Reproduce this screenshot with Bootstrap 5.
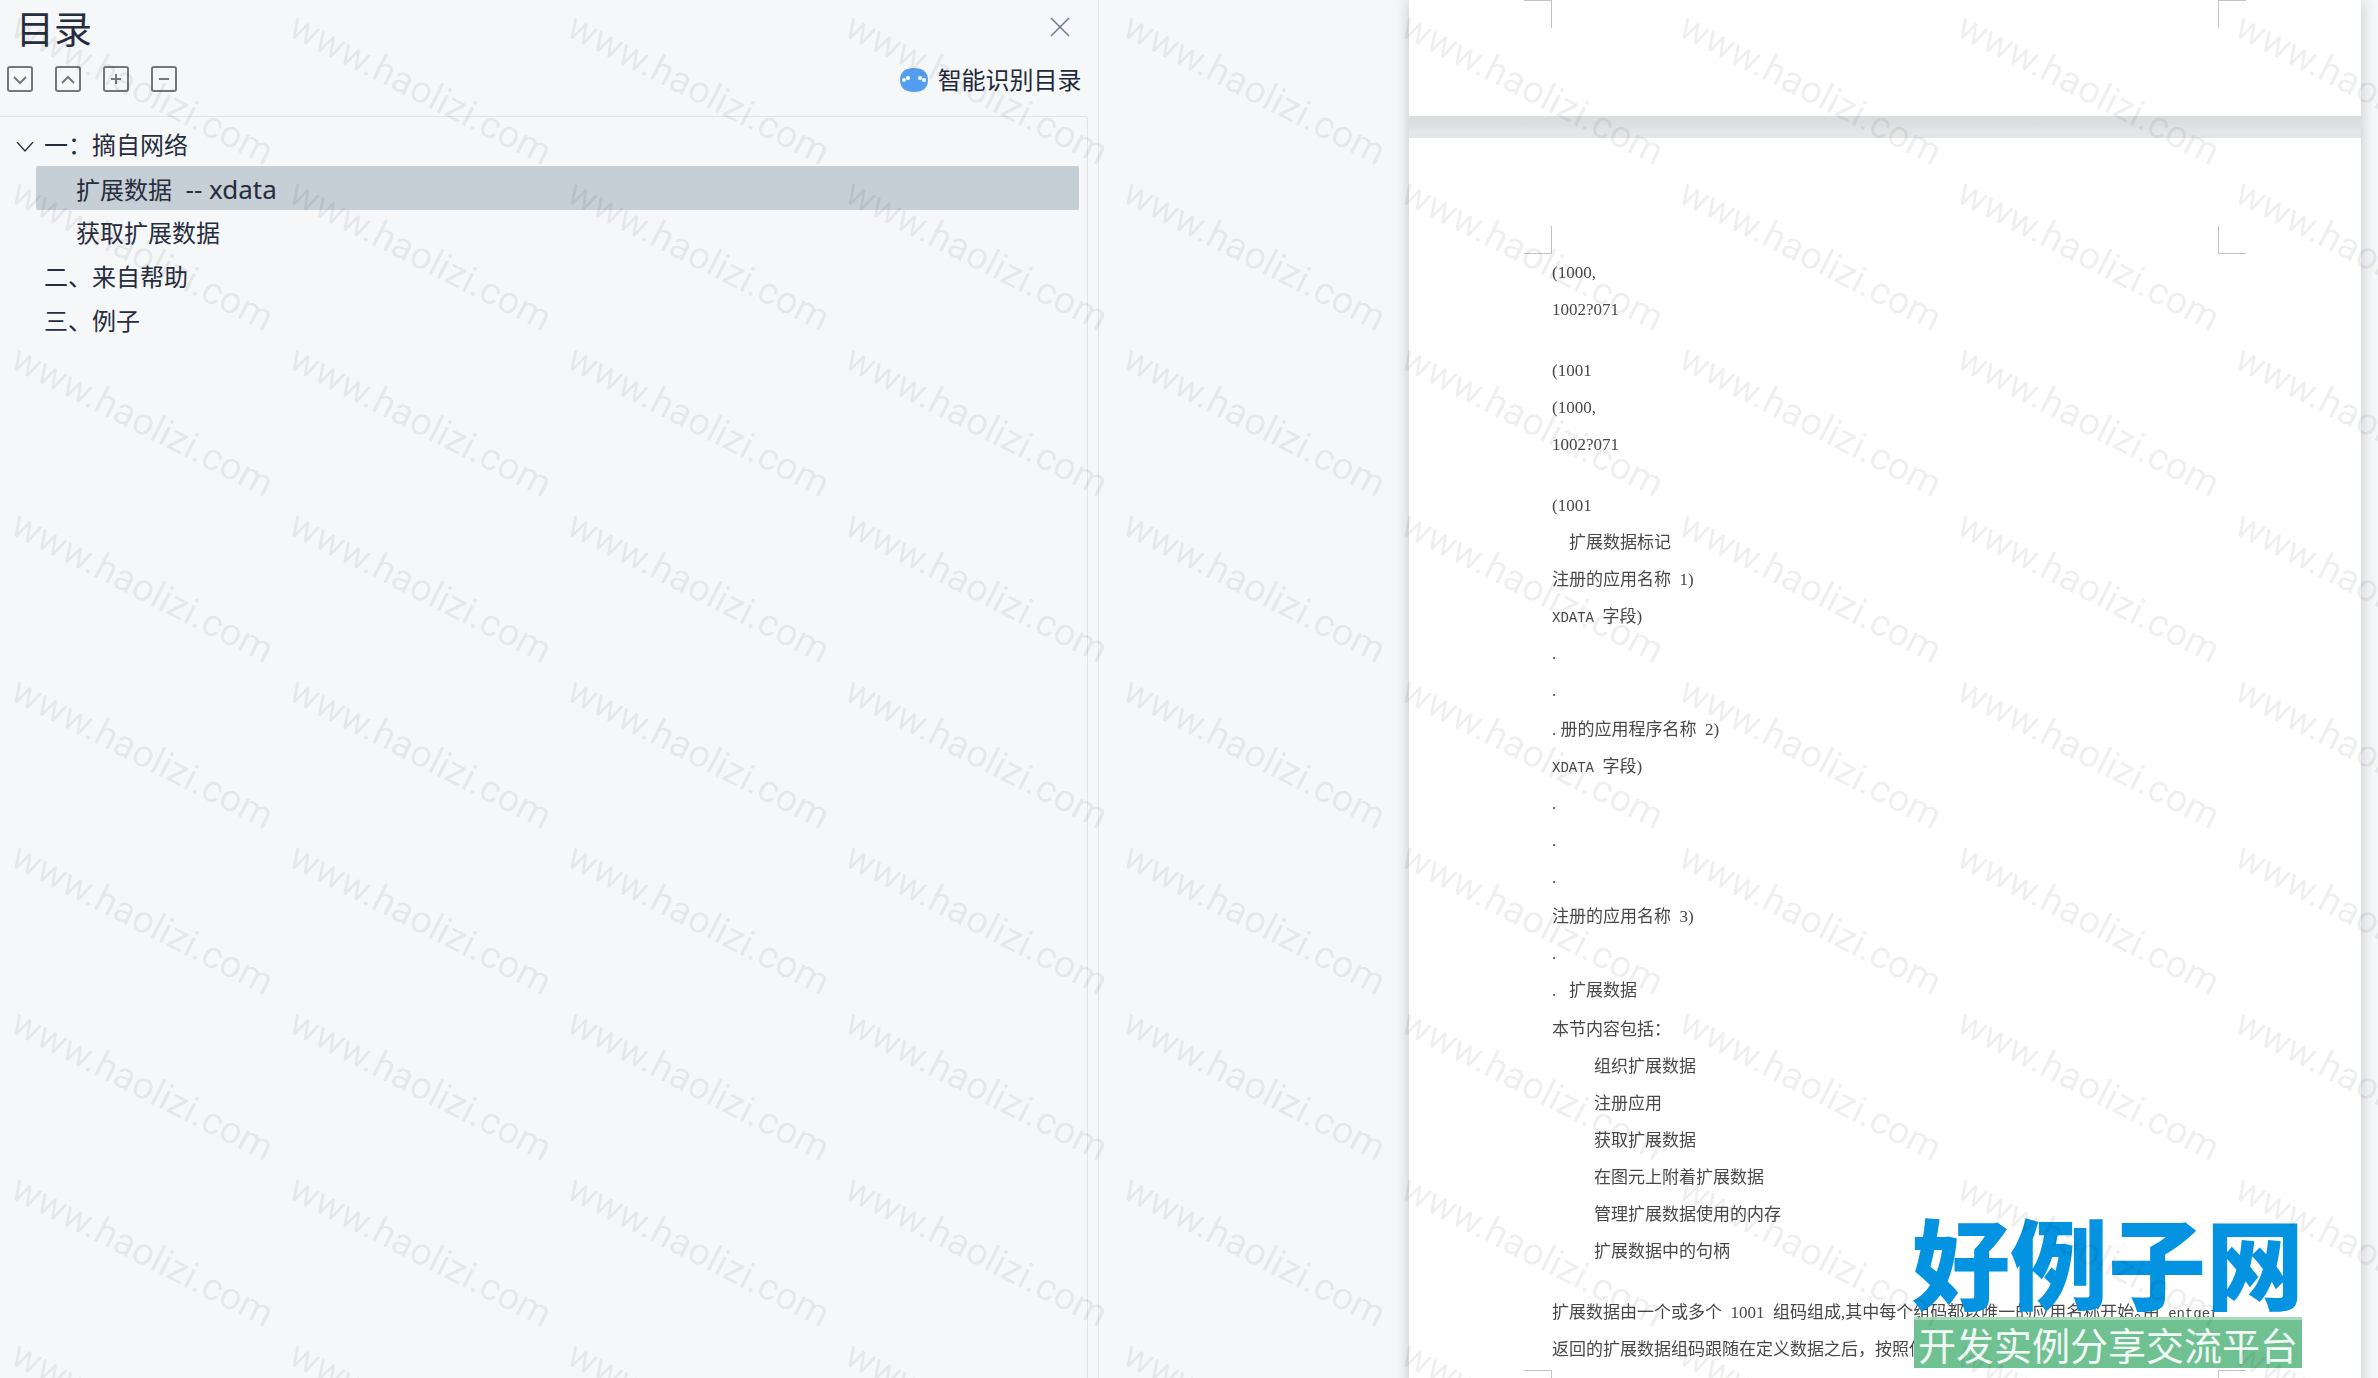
<!DOCTYPE html>
<html lang="zh-CN">
<head>
<meta charset="utf-8">
<meta name="viewport" content="width=device-width, initial-scale=1">
<title>目录</title>
<link href="https://cdn.jsdelivr.net/npm/bootstrap@5.3.0/dist/css/bootstrap.min.css" rel="stylesheet">
<style>
body{background:#f6f7f9;color:#262d3d;font-family:"Noto Sans","Noto Sans CJK SC",sans-serif}
.outline-panel{width:46.2%;border-right:1px solid #e0e3ea}
.panel-head{padding:5px 20px 0 16px}
.panel-title{font-size:38px;line-height:46px;font-weight:400}
.tool-row{height:32px;margin-top:12px}
.icon-btn{line-height:0;color:#777}
.close-btn{color:#6a7896}
.smart-link{font-size:24px;line-height:32px;color:#222a38;padding:2px 16px 0 0}
.tree-box{border:1px solid #e0e3ea;border-left:0;border-bottom:0;border-radius:0 4px 0 0;margin:21px 10px 0 0;padding:5px 8px 0 0}
.tree-row{font-size:24px;line-height:36px;height:44px;padding:5px 0 3px 8px;color:#262d3d}
.tree-sub{margin-left:36px;padding-left:40px}
.tree-sub.active{background:#c6ced6;border-radius:2px}
.tree-sub .en{font-size:26px}
.twisty{width:36px;line-height:0;color:#262d3d}
.sheets{padding-right:17px;filter:drop-shadow(0 0 8px rgba(0,0,0,.2))}
.sheet{width:952px;background:#fff;padding:0 115px}
.sheet-prev{height:116px}
.sheet-gap{width:952px;height:22px;background:linear-gradient(#dcddde 30%,#e4e5e7 70%)}
.sheet-main{padding-top:88px}
.marks{height:28px}
.marks i{width:28px;border:0 solid #c3c3c3}
.marks-top i:first-child{border-width:0 1px 1px 0}
.marks-top i:last-child{border-width:0 0 1px 1px}
.marks-end i:first-child{border-width:1px 1px 0 0}
.marks-end i:last-child{border-width:1px 0 0 1px}
.doc{padding:0 28px 2px;font:400 17px/37px "Liberation Serif","Noto Sans CJK SC",serif;color:#484848;white-space:nowrap}
.doc p{margin:0}
.doc ul{margin:0;padding-left:42px!important}
.doc section{margin-bottom:2px}
.doc .blank{height:24px}
.latin{font:14px/20px "Liberation Mono",monospace}
.half{font-feature-settings:"halt"}
.spell{border-bottom:1px dotted #e3a0a0}
.site-logo{right:76px;bottom:10px;width:388px;text-align:center;white-space:nowrap}
.logo-name{font:900 98px/100px "Noto Sans CJK SC",sans-serif;color:#0393e0;margin:0 -2px 8px}
.logo-tag{font:400 38px/48px "Noto Sans CJK SC",sans-serif;color:#f2fbf6;background:#6fc192;border-top:3px solid #a8dbbd}
.wm{inset:0;overflow:hidden;pointer-events:none;z-index:20;display:grid;grid-template-columns:repeat(9,278px);grid-auto-rows:166px;padding:0 0 0 8px}
.wm span{font:400 38px/44px Roboto,sans-serif;color:rgba(0,0,0,.07);white-space:nowrap;transform:rotate(27deg);transform-origin:0 36px;width:0}
</style>
<script src="https://cdn.jsdelivr.net/npm/bootstrap@5.3.0/dist/js/bootstrap.bundle.min.js"></script>
</head>
<body>
<div class="d-flex vh-100 overflow-hidden position-relative">
  <aside class="outline-panel d-flex flex-column flex-shrink-0">
    <header class="panel-head d-flex justify-content-between align-items-start">
      <h1 class="panel-title mb-0">目录</h1>
      <button class="btn p-0 mt-2 border-0 icon-btn close-btn" aria-label="关闭"><svg class="mt-1" width="28" height="20" viewBox="0 0 28 20" fill="none" stroke="currentColor" stroke-width="1.5"><path d="M1 1l18 18M19 1L1 19"/></svg></button>
    </header>
    <div class="d-flex justify-content-between align-items-center tool-row">
      <div class="d-flex ps-2">
        <button class="btn p-0 border-0 icon-btn me-4" aria-label="展开"><svg width="24" height="26" viewBox="1 0 24 26" overflow="visible" fill="none" stroke="currentColor" stroke-width="2"><rect x="1" y="1" width="24" height="24" rx="2"/><path d="M7 11l6 6 6-6"/></svg></button>
        <button class="btn p-0 border-0 icon-btn me-4" aria-label="收起"><svg width="24" height="26" viewBox="1 0 24 26" overflow="visible" fill="none" stroke="currentColor" stroke-width="2"><rect x="1" y="1" width="24" height="24" rx="2"/><path d="M7 17l6-6 6 6"/></svg></button>
        <button class="btn p-0 border-0 icon-btn me-4" aria-label="添加"><svg width="24" height="26" viewBox="1 0 24 26" overflow="visible" fill="none" stroke="currentColor" stroke-width="2"><rect x="1" y="1" width="24" height="24" rx="2"/><path d="M8 13h10M13 8v10"/></svg></button>
        <button class="btn p-0 border-0 icon-btn" aria-label="删除"><svg width="24" height="26" viewBox="1 0 24 26" overflow="visible" fill="none" stroke="currentColor" stroke-width="2"><rect x="1" y="1" width="24" height="24" rx="2"/><path d="M8 13h10"/></svg></button>
      </div>
      <a href="#" class="smart-link d-flex align-items-center text-decoration-none"><svg class="me-2" width="30" height="24" viewBox="0 0 30 24"><path d="M14 0C5 0 0 4 0 12s5 12 14 12 14-4 14-12S23 0 14 0z" fill="#549ef0"/><g fill="#fff"><circle cx="4" cy="12" r="2"/><circle cx="8" cy="10" r="2"/><circle cx="20" cy="10" r="2"/><circle cx="24" cy="12" r="2"/></g></svg>智能识别目录</a>
    </div>
    <nav class="tree-box flex-grow-1" aria-label="目录">
      <div class="tree-row d-flex align-items-center"><button class="btn p-0 ps-2 pt-1 border-0 twisty text-start" aria-label="折叠"><svg width="18" height="10" viewBox="0 0 18 10" fill="none" stroke="currentColor" stroke-width="1.3"><path d="M1 0l8 9 8-9"/></svg></button><a href="#" class="text-reset text-decoration-none">一：摘自网络</a></div>
      <div class="tree-row tree-sub active"><a href="#" class="text-reset text-decoration-none">扩展数据<span class="en">&nbsp; -- xdata</span></a></div>
      <div class="tree-row tree-sub"><a href="#" class="text-reset text-decoration-none">获取扩展数据</a></div>
      <div class="tree-row d-flex align-items-center"><span class="twisty"></span><a href="#" class="text-reset text-decoration-none">二、来自帮助</a></div>
      <div class="tree-row d-flex align-items-center"><span class="twisty"></span><a href="#" class="text-reset text-decoration-none">三、例子</a></div>
    </nav>
  </aside>

  <main class="flex-grow-1 d-flex flex-column align-items-end sheets">
    <div class="sheet sheet-prev flex-shrink-0">
      <div class="marks marks-end d-flex justify-content-between"><i></i><i></i></div>
    </div>
    <div class="sheet-gap flex-shrink-0"></div>
    <article class="sheet sheet-main flex-shrink-0 flex-grow-1">
      <div class="marks marks-top d-flex justify-content-between"><i></i><i></i></div>
      <div class="doc">
        <p>(1000,</p>
        <p>1002?071</p>
        <p class="blank"></p>
        <p>(1001</p>
        <p>(1000,</p>
        <p>1002?071</p>
        <p class="blank"></p>
        <p>(1001</p>
        <section>
          <p>&ensp;&ensp;扩展数据标记</p>
          <p>注册的应用名称&ensp;1)</p>
          <p><span class="latin">XDATA </span>字段)</p>
          <p>.</p>
          <p>.</p>
        </section>
        <section>
          <p>. 册的应用程序名称&ensp;2)</p>
          <p><span class="latin">XDATA </span>字段)</p>
          <p>.</p>
          <p>.</p>
          <p>.</p>
        </section>
        <section>
          <p>注册的应用名称&ensp;3)</p>
          <p>.</p>
          <p>. &ensp;扩展数据</p>
        </section>
        <p>本节内容包括：</p>
        <ul class="list-unstyled">
          <li>组织扩展数据</li>
          <li>注册应用</li>
          <li>获取扩展数据</li>
          <li>在图元上附着扩展数据</li>
          <li>管理扩展数据使用的内存</li>
          <li>扩展数据中的句柄</li>
        </ul>
        <p class="blank"></p>
        <p>扩展数据由一个或多个&ensp;1001&ensp;组码组成,其中每个组码都以唯一的应用名称开始<span class="half">。</span>由<span class="latin"> <span class="spell">entget</span></span></p>
        <p>返回的扩展数据组码跟随在定义数据之后，按照保</p>
      </div>
      <div class="marks marks-end d-flex justify-content-between"><i></i><i></i></div>
    </article>
  </main>

  <div class="site-logo position-absolute">
    <div class="logo-name">好例子网</div>
    <div class="logo-tag">开发实例分享交流平台</div>
  </div>
  <div class="wm position-absolute" id="wm" aria-hidden="true"></div>
</div>
<script>
const wm = document.getElementById('wm');
for (let i = 0; i < 81; i++) {
  const s = document.createElement('span');
  s.textContent = 'www.haolizi.com';
  wm.appendChild(s);
}
</script>
</body>
</html>
